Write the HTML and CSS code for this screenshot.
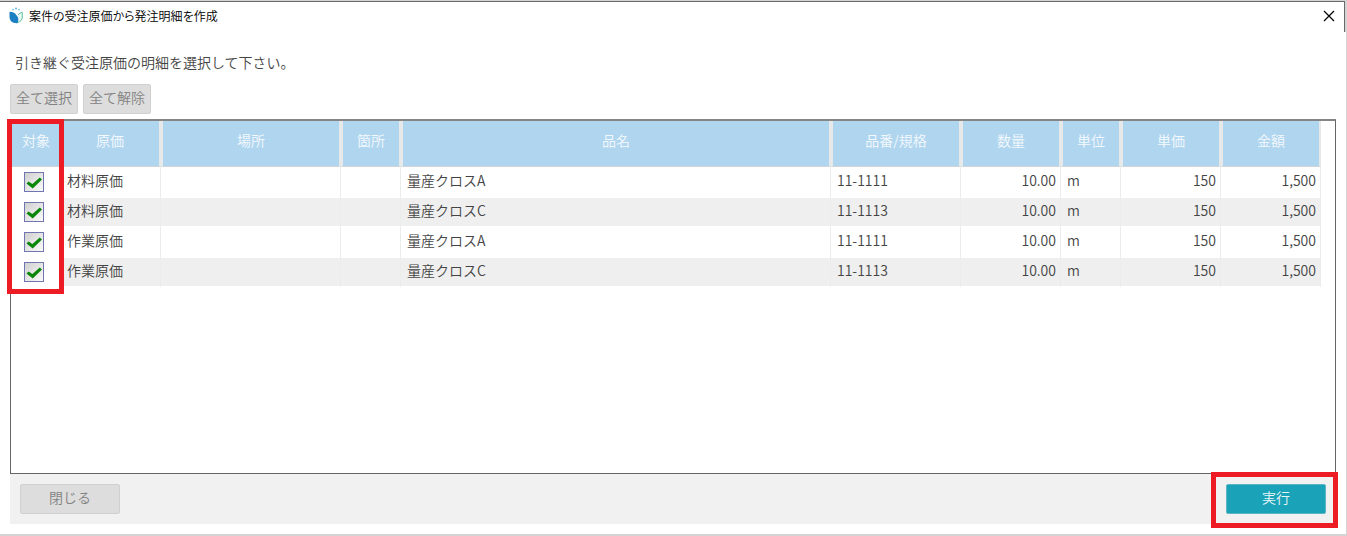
FILE: index.html
```html
<!DOCTYPE html>
<html lang="ja">

<head>
	<meta charset="UTF-8">
	<meta name="viewport" content="width=device-width, initial-scale=1.0">

	<title>案件の受注原価から発注明細を作成</title>

	<link rel="stylesheet" href="styles.css">
</head>

<body>
	<div class="window">
		<header class="titlebar">
			<svg class="logo" width="14" height="18" viewBox="0 0 14 18" aria-hidden="true">
				<path d="M8 15.500c3.500-.5 5.300-2.500 5.300-5.500V5.500C11.500 5.500 10 6.500 9 8" fill="#e8f8f2" stroke="#5cc0a4" />
				<path d="M.5 4.800c3 0 5.500 1 6.800 3.200C9.500 10 10 13 8.500 16.200 3.500 16.500.5 14 .5 9.500z" fill="#1c7fc4" />
				<circle cx="7" cy="1.500" r="1" fill="#62b4e4" />
				<circle cx="4" cy="2.600" r=".9" fill="#79c2e8" />
				<circle cx="10" cy="2.600" r=".9" fill="#79c2e8" />
			</svg>
			<h1>案件の受注原価から発注明細を作成</h1>
			<button type="button" class="window-close" aria-label="閉じる">
				<svg width="12" height="12" viewBox="0 0 12 12">
					<path d="M1 1l10 10M11 1L1 11" stroke="#000" stroke-width="1.200" />
				</svg>
			</button>
		</header>

		<main class="content">
			<p class="message">引き継ぐ受注原価の明細を選択して下さい。</p>
			<div class="toolbar">
				<button type="button" class="btn">全て選択</button>
				<button type="button" class="btn">全て解除</button>
			</div>

			<div class="grid">
				<table>
					<colgroup>
						<col class="w-50">
						<col class="w-100">
						<col class="w-180">
						<col class="w-60">
						<col>
						<col class="w-130">
						<col class="w-100">
						<col class="w-60">
						<col class="w-100">
						<col class="w-100">
					</colgroup>
					<thead>
						<tr>
							<th>対象</th>
							<th>原価</th>
							<th>場所</th>
							<th>箇所</th>
							<th>品名</th>
							<th>品番/規格</th>
							<th>数量</th>
							<th>単位</th>
							<th>単価</th>
							<th>金額</th>
						</tr>
					</thead>
					<tbody>
						<tr>
							<td class="check"><input type="checkbox" aria-label="対象" checked></td>
							<td>材料原価</td>
							<td></td>
							<td></td>
							<td>量産クロスA</td>
							<td>11-1111</td>
							<td class="num">10.00</td>
							<td>m</td>
							<td class="num">150</td>
							<td class="num">1,500</td>
						</tr>
						<tr>
							<td class="check"><input type="checkbox" aria-label="対象" checked></td>
							<td>材料原価</td>
							<td></td>
							<td></td>
							<td>量産クロスC</td>
							<td>11-1113</td>
							<td class="num">10.00</td>
							<td>m</td>
							<td class="num">150</td>
							<td class="num">1,500</td>
						</tr>
						<tr>
							<td class="check"><input type="checkbox" aria-label="対象" checked></td>
							<td>作業原価</td>
							<td></td>
							<td></td>
							<td>量産クロスA</td>
							<td>11-1111</td>
							<td class="num">10.00</td>
							<td>m</td>
							<td class="num">150</td>
							<td class="num">1,500</td>
						</tr>
						<tr>
							<td class="check"><input type="checkbox" aria-label="対象" checked></td>
							<td>作業原価</td>
							<td></td>
							<td></td>
							<td>量産クロスC</td>
							<td>11-1113</td>
							<td class="num">10.00</td>
							<td>m</td>
							<td class="num">150</td>
							<td class="num">1,500</td>
						</tr>
					</tbody>
				</table>
				<div class="marker marker-check"></div>
			</div>

			<footer class="actions">
				<button type="button" class="btn btn-wide">閉じる</button>
				<div class="run">
					<button type="button" class="btn btn-wide btn-primary">実行</button>
					<div class="marker marker-run"></div>
				</div>
			</footer>
		</main>
	</div>
</body>

</html>
```
FILE: styles.css
```css
*,
*:before,
*:after {
	box-sizing: border-box;
}

body {
	margin: 0;
	background-color: #d4d4d4;
	color: #444;
	font: 14px/20px "Noto Sans CJK JP", sans-serif;
	font-weight: 350;
}

.window {
	display: flex;
	flex-direction: column;
	min-height: 100vh;
	padding: 1px 1px 2px 0;
}

.titlebar {
	display: flex;
	flex: 0 0 31px;
	align-items: center;
	margin-right: 1px;
	padding: 0 9px 2px;
	background-color: #fff;
	border-top: 1px solid #6a6a6a;
	border-right: 1px solid #6a6a6a;
}

.titlebar h1 {
	flex: 1;
	margin: 0 0 0 6px;
	color: #000;
	font-size: 12px;
	font-weight: 350;
	font-feature-settings: "palt";
}

.window-close {
	display: flex;
	padding: 0;
	background: none;
	border: 0;
}

.content {
	display: flex;
	flex: 1;
	flex-direction: column;
	padding: 20px 10px 10px;
	background-color: #fff;
}

.message {
	margin: 0 5px;
}

.toolbar {
	display: flex;
	gap: 5px;
	margin: 12px 0 5px;
}

.btn {
	height: 30px;
	padding: 0 5px 5px;
	background-color: #ddd;
	border: 1px solid #d0d0d0;
	border-radius: 2px;
	color: #838383;
	font: inherit;
}

.btn-wide {
	width: 100px;
}

.btn-primary {
	background-color: #19a2b8;
	border-color: #58b5c4;
	color: #e8f6f8;
}

.grid {
	position: relative;
	flex: 1;
	padding-right: 14px;
	border: 1px solid #666;
	border-top: 2px solid #858585;
}

table {
	width: 100%;
	table-layout: fixed;
	border-collapse: separate;
	border-spacing: 0;
}

.w-50 { width: 50px; }
.w-60 { width: 60px; }
.w-100 { width: 100px; }
.w-130 { width: 130px; }
.w-180 { width: 180px; }

th {
	height: 46px;
	padding: 0 0 8px;
	background-color: #b0d5ef;
	border-right: 2px solid #e6e8ea;
	border-bottom: 1px solid #d0d4d8;
	color: #f4f9fd;
	font-weight: 350;
}

th:nth-child(n+3) {
	border-left: 2px solid #e6e8ea;
}

th:first-child {
	border-right: 0;
}

td {
	height: 30px;
	padding: 0 4px 4px 6px;
	border-right: 1px solid #ececec;
	white-space: nowrap;
}

td:first-child {
	border-right: 0;
}

tbody tr:nth-child(even) td {
	background: linear-gradient(#efefef, #efefef) 0 1px / 100% 28px no-repeat;
}

.num {
	text-align: right;
}

tbody .check {
	padding: 0 0 0 13px;
	line-height: 0;
}

tbody tr:nth-child(even) .check {
	background: none;
}

.check input {
	appearance: none;
	display: inline-block;
	width: 20px;
	height: 20px;
	margin: 0;
	background: linear-gradient(135deg, #d0d0d0, #fafafa);
	border: 1px solid #7276b0;
}

.check input:checked:before {
	content: "";
	display: block;
	width: 16px;
	height: 12px;
	margin: 4px 1px;
	background-color: #0a870a;
	clip-path: polygon(3% 54%, 16% 38%, 40% 58%, 86% 4%, 100% 20%, 42% 96%);
}

.actions {
	display: flex;
	flex: 0 0 50px;
	align-items: center;
	justify-content: space-between;
	padding: 0 10px;
	background-color: #f1f1f1;
}

.run {
	position: relative;
	display: flex;
}

/* red frames calling out the parts to operate */
.marker {
	position: absolute;
	border: 5px solid #ed1c24;
	pointer-events: none;
}

.marker-check {
	top: -2px;
	left: -4px;
	width: 57px;
	height: 175px;
}

.marker-run {
	inset: -12px -12px -14px -15px;
}
```
